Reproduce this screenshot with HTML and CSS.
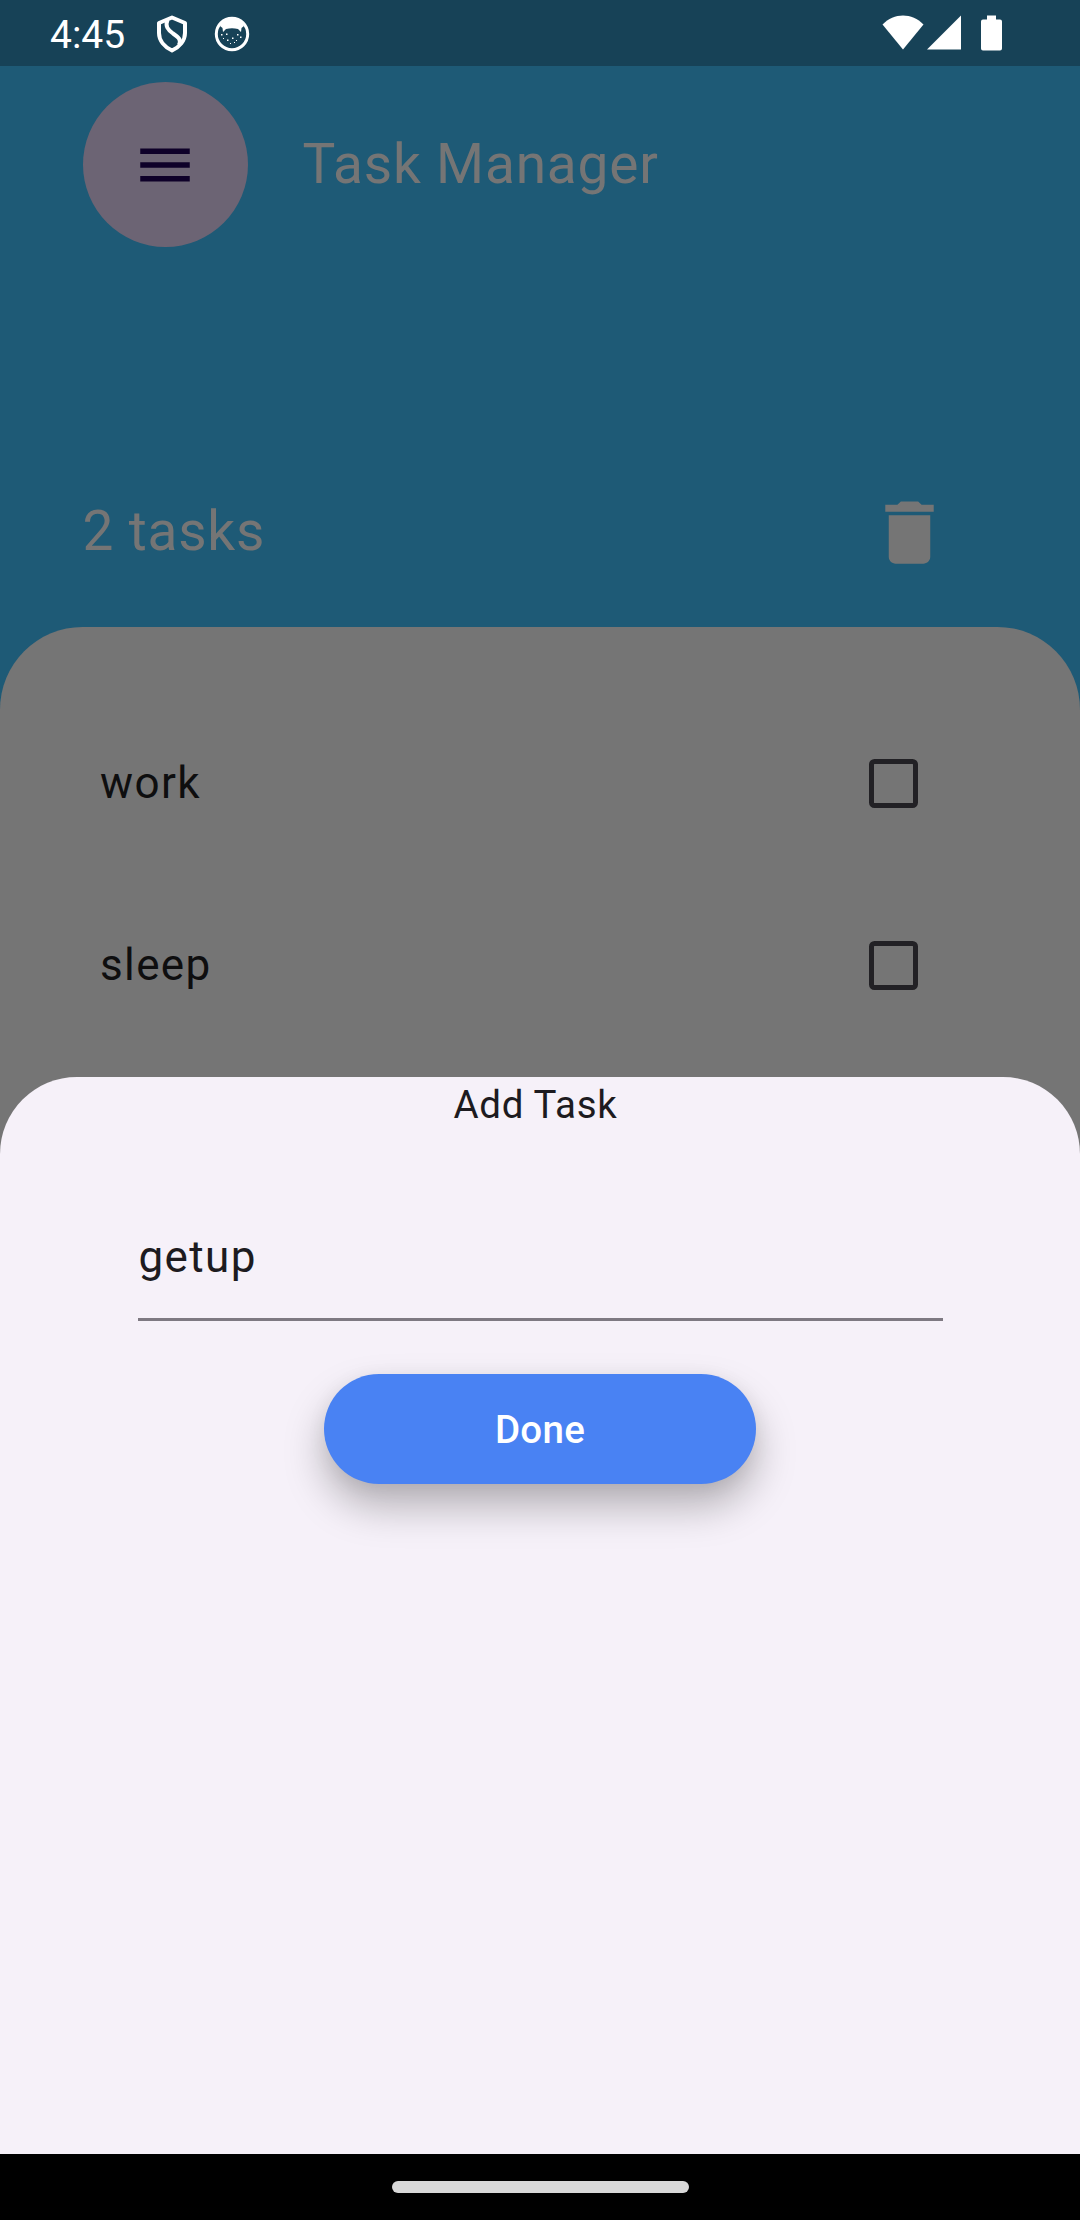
FILE: index.html
```html
<!DOCTYPE html>
<html lang="en">
<head>
<meta charset="utf-8">
<title>Task Manager</title>
<link rel="stylesheet" href="styles.css">
</head>
<body>
<div class="screen">
  <header class="status-bar">
    <span class="clock">4:45</span>
    <svg class="shield" viewBox="0 0 32 38" fill="none" stroke="#fff" stroke-width="4" stroke-linejoin="round"><path d="M16 2.500 L29 8 V18 C29 25.500 23.500 32 16 35.500 C8.500 32 3 25.500 3 18 V8 Z"/><path d="M11.500 5 C9 11 11.500 14.500 17 18.500 C23 22.500 25.500 25 23 30"/></svg>
    <svg class="cat" viewBox="0 0 36 36"><circle cx="18" cy="18" r="15.700" fill="none" stroke="#fff" stroke-width="3"/><path d="M6 10 C8 4 12 2 18 2 C24 2 28 4 30 10 L27.500 12 L27 16 L24 13 Q18 11.500 12 13 L9 16 L8.500 12 Z" fill="#fff"/><g fill="#fff"><path d="M7 18h1.500v1.500H7zM12 17.500h1.500V19H12zM23 18h1.500v1.500H23zM18 21.500h1.500V23H18zM13 23.500h1.500V25H13zM26 20.500h1.500V22H26zM9 22h1v1H9zM22 24h1v1h-1zM16 27h1v1h-1zM20 26h1v1h-1z"/></g></svg>
    <svg class="signals" viewBox="0 0 122 40" fill="#fff"><path d="M0.500 11.500 C12 -0.500 30 -0.500 41.500 11.500 L21 36.500Z"/><path d="M45 36.500 L79 2.500 V36.500Z"/><path d="M105 2.500h9v4h4q2 0 2 2V35.500q0 2-2 2h-17q-2 0-2-2V8.500q0-2 2-2h4z"/></svg>
  </header>
  <div class="app-bar">
    <button class="menu-button" aria-label="Menu"><svg viewBox="0 0 24 24" fill="#0e0029"><path d="M3 18h18v-2H3v2zm0-5h18v-2H3v2zm0-7v2h18V6H3z"/></svg></button>
    <h1 class="heading">Task Manager</h1>
  </div>
  <div class="summary">
    <span class="heading">2 tasks</span>
    <svg class="trash" viewBox="0 0 24 24" fill="#757575"><path d="M6 19c0 1.100.9 2 2 2h8c1.100 0 2-.9 2-2V7H6v12zM19 4h-3.500l-1-1h-5l-1 1H5v2h14V4z"/></svg>
  </div>
  <main class="task-list">
    <label class="task"><span class="task-name">work</span><span class="checkbox"></span></label>
    <label class="task"><span class="task-name">sleep</span><span class="checkbox"></span></label>
  </main>
  <section class="sheet">
    <h2 class="sheet-title">Add Task</h2>
    <div class="field">getup</div>
    <button class="done">Done</button>
  </section>
  <footer class="nav-bar"><span class="handle"></span></footer>
</div>
</body>
</html>
```
FILE: styles.css
```css
* { box-sizing: border-box; }
body { margin: 0; font-family: Roboto, "Noto Sans", sans-serif; }
button { border: 0; padding: 0; font-family: inherit; }
svg { display: block; flex: none; }
.screen {
  position: relative;
  display: flex;
  flex-direction: column;
  width: 1080px;
  height: 2220px;
  overflow: hidden;
  background: #1e5a76;
}
.status-bar {
  display: flex;
  align-items: center;
  height: 66px;
  padding: 0 76px 0 50px;
  background: #174257;
  color: #fff;
}
.clock { width: 106px; padding-top: 4px; font-size: 39px; line-height: 46px; }
.shield { width: 32px; height: 38px; margin-top: 1px; }
.cat { width: 36px; height: 36px; margin-left: 26px; margin-top: 1px; }
.signals { width: 122px; height: 40px; margin-left: auto; }
.app-bar {
  display: flex;
  align-items: center;
  gap: 55px;
  height: 165px;
  margin-top: 16px;
  padding-left: 82.5px;
}
.menu-button {
  display: grid;
  place-items: center;
  width: 165px;
  height: 165px;
  border-radius: 50%;
  background: #6c6474;
}
.menu-button svg { width: 66px; height: 66px; }
.heading {
  margin: 0;
  padding-bottom: 2px;
  font-size: 55px;
  font-weight: 400;
  line-height: 64px;
  letter-spacing: 0.8px;
  color: #757575;
}
.summary {
  display: flex;
  align-items: center;
  justify-content: space-between;
  height: 110px;
  margin-top: 230px;
  padding: 0 129px 0 82.5px;
}
.trash { width: 83px; height: 83px; }
.task-list {
  flex: 1;
  margin-top: 40px;
  padding: 79.5px 162px 0 100px;
  border-radius: 82.5px 82.5px 0 0;
  background: #757575;
}
.task {
  display: flex;
  align-items: center;
  justify-content: space-between;
  height: 154px;
  margin-bottom: 28px;
  font-size: 44px;
  letter-spacing: 1.375px;
  color: #0e0e0f;
}
.task-name { padding-bottom: 2px; }
.checkbox {
  width: 49.5px;
  height: 49.5px;
  border: 5.5px solid #222125;
  border-radius: 5.5px;
}
.sheet {
  position: absolute;
  left: 0;
  right: 0;
  top: 1077px;
  bottom: 66px;
  display: flex;
  flex-direction: column;
  align-items: center;
  padding: 5px 137.5px 0;
  border-radius: 77px 77px 0 0;
  background: #f6f1f9;
  color: #1d1b20;
}
.sheet-title {
  margin: 0;
  padding-right: 9px;
  font-size: 38.5px;
  font-weight: 400;
  line-height: 46px;
  letter-spacing: 0.7px;
}
.field {
  width: 100%;
  height: 132px;
  margin-top: 60.5px;
  padding: 42px 0 0 1px;
  border-bottom: 3px solid #7e7982;
  font-size: 44px;
  line-height: 52px;
  letter-spacing: 1.375px;
}
.done {
  width: 432px;
  height: 110px;
  margin-top: 53.5px;
  border-radius: 55px;
  background: #4982f3;
  box-shadow: 0 22px 40px rgba(0, 0, 0, 0.27), 0 4px 20px rgba(0, 0, 0, 0.06);
  color: #fff;
  font-size: 38.5px;
  font-weight: 500;
  letter-spacing: 0.275px;
}
.nav-bar {
  display: flex;
  justify-content: center;
  height: 66px;
  padding-top: 27px;
  background: #000;
}
.handle { width: 297px; height: 12px; border-radius: 6px; background: #d8d8d8; }
```
